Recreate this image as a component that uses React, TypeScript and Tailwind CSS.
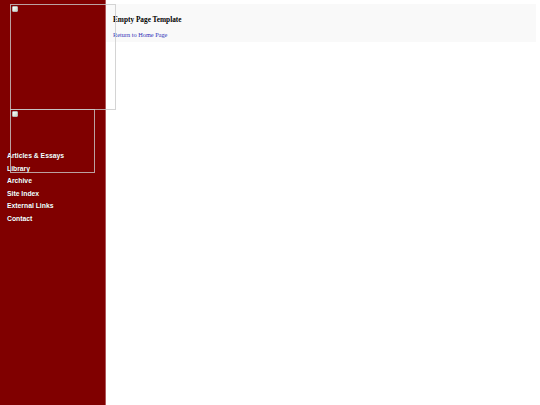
import React from "react";

const navItems = [
  "Articles & Essays",
  "Library",
  "Archive",
  "Site Index",
  "External Links",
  "Contact",
];

function BrokenImage({ className }: { className: string }) {
  return (
    <div className={"relative border border-[#c9c9c9]/80 " + className}>
      <div className="absolute left-[1px] top-[1px] h-[6px] w-[6px] rounded-[1px] border border-[#b8b8b8] bg-gradient-to-br from-[#ffffff] to-[#c8d8c4]" />
    </div>
  );
}

export default function App() {
  return (
    <div className="flex h-[405px] w-[540px] overflow-hidden bg-white">
      <aside className="relative z-10 h-full w-[106px] shrink-0 border-r border-[#b0585a] bg-[#800000]">
        <div className="pl-[10px] pt-[4px]">
          <BrokenImage className="h-[106px] w-[106px]" />
          <div className="h-[41px]">
            <BrokenImage className="-mt-[1px] h-[64px] w-[85px]" />
          </div>
        </div>
        <nav className="flex flex-col pl-[7px] font-['Liberation_Sans',Arial,sans-serif] text-[6.8px] font-bold leading-[12.6px] text-white [text-shadow:0_0_1px_rgba(0,0,0,0.5)]">
          {navItems.map((item) => (
            <a key={item} href="#" className="block">
              {item}
            </a>
          ))}
        </nav>
      </aside>
      <main className="flex-1 pr-[4px] pt-[4px]">
        <div className="h-[38px] bg-[#f9f9f9] pl-[7px] pt-[11px] font-['Liberation_Serif','Times_New_Roman',serif]">
          <h1 className="text-[7.3px] font-bold leading-[10px] text-black">
            Empty Page Template
          </h1>
          <a href="#" className="mt-[5px] block text-[6.3px] leading-[9px] text-[#3030b8]">
            Return to Home Page
          </a>
        </div>
      </main>
    </div>
  );
}
